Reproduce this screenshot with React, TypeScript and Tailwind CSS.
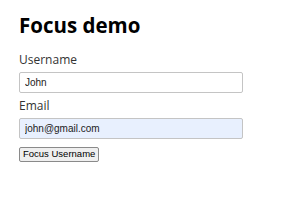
import { useRef } from "react";

export default function App() {
  const usernameRef = useRef<HTMLInputElement>(null);

  return (
    <div className="px-[19px] pt-[11px] font-['Open_Sans',sans-serif] text-[#222]">
      {/* Title */}
      <h1 className="text-[20.5px] font-bold leading-[28px] text-black">Focus demo</h1>

      <div className="mt-[13px] flex flex-col">
        <label className="text-[12px] leading-[16px] text-[#333]">Username</label>
        <input
          ref={usernameRef}
          defaultValue="John"
          className="mt-[4px] h-[21px] w-[224px] rounded-[2px] border border-[#c4c4c4] bg-white px-[5px] font-['Liberation_Sans',sans-serif] text-[10px] text-[#222] outline-none"
        />

        <label className="mt-[5px] text-[12px] leading-[16px] text-[#333]">Email</label>
        <input
          defaultValue="john@gmail.com"
          className="mt-[4px] h-[21px] w-[224px] rounded-[2px] border border-[#c4c4c4] bg-[#e8f0fe] px-[5px] font-['Liberation_Sans',sans-serif] text-[10px] text-[#222] outline-none"
        />
      </div>

      <button
        onClick={() => usernameRef.current?.focus()}
        className="mt-[6px] h-[15px] rounded-[2px] border border-[#8a8a8a] bg-[#efefef] px-[3px] font-['Liberation_Sans',sans-serif] text-[9.5px] leading-[12px] text-black"
      >
        Focus Username
      </button>
    </div>
  );
}
